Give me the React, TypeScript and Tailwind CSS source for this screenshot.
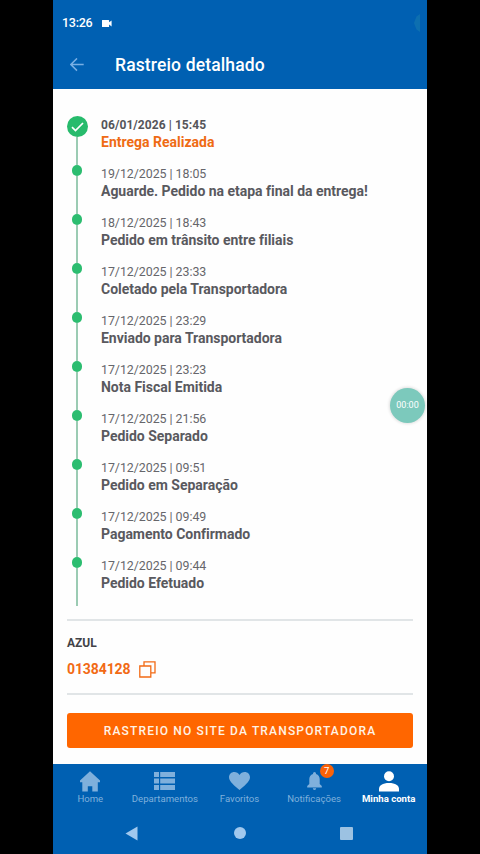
import type { ReactNode } from "react";

type TrackingEvent = {
  date: string;
  title: string;
};

const events: TrackingEvent[] = [
  { date: "06/01/2026 | 15:45", title: "Entrega Realizada" },
  { date: "19/12/2025 | 18:05", title: "Aguarde. Pedido na etapa final da entrega!" },
  { date: "18/12/2025 | 18:43", title: "Pedido em trânsito entre filiais" },
  { date: "17/12/2025 | 23:33", title: "Coletado pela Transportadora" },
  { date: "17/12/2025 | 23:29", title: "Enviado para Transportadora" },
  { date: "17/12/2025 | 23:23", title: "Nota Fiscal Emitida" },
  { date: "17/12/2025 | 21:56", title: "Pedido Separado" },
  { date: "17/12/2025 | 09:51", title: "Pedido em Separação" },
  { date: "17/12/2025 | 09:49", title: "Pagamento Confirmado" },
  { date: "17/12/2025 | 09:44", title: "Pedido Efetuado" },
];

function StatusBar() {
  return (
    <div className="flex h-[46px] items-center pl-[9px] text-white">
      <span className="pt-[1px] text-[12.5px] font-medium leading-none tracking-[-0.25px]">13:26</span>
      <svg className="ml-[10px]" width="10" height="7" viewBox="0 0 10 7" fill="currentColor">
        <path d="M0.5 0h6a.6.6 0 0 1 .6.6v1.7L9.6.4v6L7.1 4.5v1.9a.6.6 0 0 1-.6.6h-6a.5.5 0 0 1-.5-.6V.6A.5.5 0 0 1 .5 0z" />
      </svg>
      <svg className="ml-auto mr-[6px]" width="8" height="20" viewBox="0 0 8 20">
        <path d="M7 1L3.5 3.5L1 10l2.5 6.5L7 19z" fill="#0d6fb0" />
      </svg>
    </div>
  );
}

function Header() {
  return (
    <header className="h-[89px] bg-[#0060b2]">
      <StatusBar />
      <div className="flex h-[37px] items-center pl-[17px]">
        <svg width="14" height="14" viewBox="0 0 14 14" fill="none" stroke="#78afe4" strokeWidth="1.5">
          <path d="M13.7 6.5H1.2M7 .4L.9 6.5L7 12.6" />
        </svg>
        <h1 className="ml-[31px] pt-[2px] text-[17.5px] font-medium leading-none tracking-[0.14px] text-white">
          Rastreio detalhado
        </h1>
      </div>
    </header>
  );
}

function TimelineItem({ event, current }: { event: TrackingEvent; current: boolean }) {
  return (
    <li className="flex h-[49px]">
      <div className="flex w-[20px] flex-col items-center">
        {current ? (
          <div className="flex size-[21px] shrink-0 items-center justify-center rounded-full bg-[#27bb6c]">
            <svg width="13" height="10" viewBox="0 0 13 10" fill="none" stroke="white" strokeWidth="1.7">
              <path d="M1 5.2L4.5 8.5L12 1" />
            </svg>
          </div>
        ) : (
          <div className="size-[10.5px] shrink-0 rounded-full bg-[#2cbd70]" />
        )}
        <div className="w-[2px] grow bg-[#9bcbb3]" />
      </div>
      <div className="ml-[14px] whitespace-nowrap">
        <p
          className={
            current
              ? "pt-[1px] text-[12px] font-bold leading-[17px] tracking-[0.07px] text-[#55555a]"
              : "pb-[1px] text-[12.4px] leading-[17px] tracking-[-0.04px] text-[#66666b]"
          }
        >
          {event.date}
        </p>
        <p
          className={
            current
              ? "text-[14px] font-bold leading-[17px] text-[#ef6b14]"
              : "text-[14px] font-bold leading-[17px] tracking-[-0.02px] text-[#59595e]"
          }
        >
          {event.title}
        </p>
      </div>
    </li>
  );
}

function NavItem({ label, active, children }: { label: string; active?: boolean; children: ReactNode }) {
  return (
    <div
      className={
        active
          ? "flex w-1/5 flex-col items-center font-bold text-white"
          : "flex w-1/5 flex-col items-center text-[#7fb0dc]"
      }
    >
      <div className="relative flex h-[22px] items-center justify-center">{children}</div>
      <span className="mt-[1px] whitespace-nowrap text-[9.6px] leading-[12px]">{label}</span>
    </div>
  );
}

function BottomNav() {
  return (
    <nav className="mr-[1px] flex h-[48px] pt-[6px]">
      <NavItem label="Home">
        <svg width="20" height="21" viewBox="0 0 20 21" fill="#7fb0dc">
          <path d="M10 .3L20 9.6v1.6h-2.2v9.3h-5.5v-5.2H7.8v5.2H2.3v-9.3H0V9.6z" />
        </svg>
      </NavItem>
      <NavItem label="Departamentos">
        <svg width="21" height="18" viewBox="0 0 21 18" fill="#7fb0dc">
          <path d="M0 0h5v5H0zM6.2 0H21v5H6.2zM0 6.5h5v5H0zM6.2 6.5H21v5H6.2zM0 13h5v5H0zM6.2 13H21v5H6.2z" />
        </svg>
      </NavItem>
      <NavItem label="Favoritos">
        <svg width="21" height="18" viewBox="0 0 21 18" fill="#7fb0dc">
          <path d="M10.5 18C6 14.2 0 9.8 0 5.3C0 2.2 2.3 0 5.3 0c2.1 0 4.2 1.1 5.2 3c1-1.9 3.1-3 5.2-3c3 0 5.3 2.2 5.3 5.3c0 4.5-6 8.9-10.5 12.700z" />
        </svg>
      </NavItem>
      <NavItem label="Notificações">
        <svg width="15" height="18" viewBox="0 0 15 18" fill="#7fb0dc">
          <path d="M6 1.5a1.5 1.5 0 0 1 3 0v.4c2.5.7 3.700 2.700 3.700 5.200v5l2.100 2V15.500H.2v-1.400l2.100-2v-5c0-2.500 1.200-4.500 3.700-5.200zM5.800 16.200h3.400a1.700 1.700 0 0 1-3.400 0z" />
        </svg>
        <span className="absolute -right-[12px] -top-[6px] flex size-[14px] items-center justify-center rounded-full bg-[#fa6209] text-[9.5px] leading-none text-white">
          7
        </span>
      </NavItem>
      <NavItem label="Minha conta" active>
        <svg width="20" height="21" viewBox="0 0 20 21" fill="currentColor">
          <circle cx="10" cy="5.3" r="5" />
          <path d="M0 20.5v-2.5c0-3.6 3.6-6 10-6s10 2.4 10 6v2.5z" />
        </svg>
      </NavItem>
    </nav>
  );
}

function SystemNav() {
  return (
    <div className="flex h-[42px] items-center pl-[72px] text-[#a0c8ee]">
      <svg width="13" height="15" viewBox="0 0 13 15" fill="currentColor">
        <path d="M12.5.5v14L.5 7.5z" />
      </svg>
      <div className="ml-[96px] size-[12px] rounded-full bg-[#a0c8ee]" />
      <div className="ml-[94px] size-[13px] rounded-[1px] bg-[#9cc2e2]" />
    </div>
  );
}

export default function App() {
  return (
    <div className="flex h-[854px] w-[480px] justify-center overflow-hidden bg-black font-['Roboto',sans-serif]">
      <div className="relative flex w-[374px] flex-col bg-[#fefefe]">
        <Header />

        <main className="flex h-[675px] flex-col px-[14px] pt-[27px]">
          <ul>
            {events.map((event, index) => (
              <TimelineItem key={event.date} event={event} current={index === 0} />
            ))}
          </ul>

          <section className="mt-[13px] h-[76px] border-y-2 border-[#e1e5e7] pt-[14px]">
            <h2 className="text-[12px] font-bold leading-[16px] text-[#434347]">AZUL</h2>
            <div className="mt-[8px] flex items-center text-[#f26a15]">
              <span className="text-[14px] font-bold leading-[20px] tracking-[-0.1px]">01384128</span>
              <svg className="ml-[9px]" width="17" height="17" viewBox="0 0 17 17" fill="none" stroke="currentColor" strokeWidth="1.3">
                <path d="M.8 5h11v11H.8zM5 5V.8h11v11h-4.2" />
              </svg>
            </div>
          </section>

          <button className="mt-[18px] h-[35px] w-full shrink-0 rounded-[3px] bg-[#ff6600] text-[12px] font-medium tracking-[1.17px] text-[#fff3e6]">
            RASTREIO NO SITE DA TRANSPORTADORA
          </button>
        </main>

        <footer className="h-[90px] bg-[#0060b2]">
          <BottomNav />
          <SystemNav />
        </footer>

        {/* floating screen recorder timer */}
        <div className="absolute right-[2px] top-[388px] flex size-[35px] items-center justify-center rounded-full bg-[#7cc9bc] pt-[1px] text-[9px] text-white shadow-[0_0_3px_1px_rgba(0,0,0,0.12)]">
          00:00
        </div>
      </div>
    </div>
  );
}
